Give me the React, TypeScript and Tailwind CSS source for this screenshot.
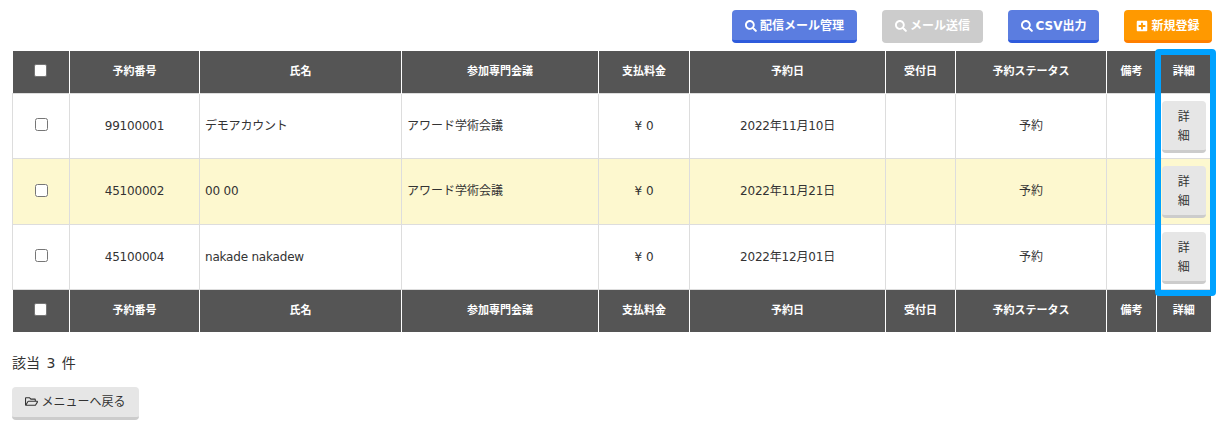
import React from 'react';
import { FaSearch, FaPlusSquare, FaRegFolderOpen } from 'react-icons/fa';

const heads = ['予約番号', '氏名', '参加専門会議', '支払料金', '予約日', '受付日', '予約ステータス', '備考', '詳細'];

const rows = [
    { no: '99100001', name: 'デモアカウント', conf: 'アワード学術会議', date: '2022年11月10日', bg: 'bg-white' },
    { no: '45100002', name: '00 00', conf: 'アワード学術会議', date: '2022年11月21日', bg: 'bg-[#fdf8cf]' },
    { no: '45100004', name: 'nakade nakadew', conf: '', date: '2022年12月01日', bg: 'bg-white' },
];

function TopButton({ label, icon, className }: { label: string; icon: React.ReactNode; className: string }) {
    return (
        <button className={`flex h-[33px] items-center justify-center gap-[3px] rounded-[4px] border-b-[3px] pt-px text-[12px] font-bold text-white ${className}`}>
            {icon}
            {label}
        </button>
    );
}

function HeadRow() {
    return (
        <tr className="h-[42px] bg-[#555555] text-[11px] font-bold text-white">
            <th className="border-r border-white p-0">
                <span className="mx-auto mb-[2px] block h-[13px] w-[13px] rounded-[2px] border border-[#767676] bg-white" />
            </th>
            {heads.map((h, i) => (
                <th key={h} className={i < heads.length - 1 ? 'border-r border-white p-0' : 'p-0'}>
                    {h}
                </th>
            ))}
        </tr>
    );
}

export default function App() {
    return (
        <div className="relative h-[430px] w-[1224px] overflow-hidden bg-white px-3 pt-[10px] font-['DejaVu_Sans','Noto_Sans_CJK_JP',sans-serif] text-[#333333]">
            <div className="mb-2 flex justify-end gap-[25px]">
                <TopButton label="配信メール管理" icon={<FaSearch size={12} />} className="w-[125px] border-[#2f5bdc] bg-[#5b7de0]" />
                <TopButton label="メール送信" icon={<FaSearch size={12} />} className="w-[101px] border-[#cccccc] bg-[#cccccc]" />
                <TopButton label="CSV出力" icon={<FaSearch size={12} />} className="w-[91px] border-[#2f5bdc] bg-[#5b7de0]" />
                <TopButton label="新規登録" icon={<FaPlusSquare size={12} />} className="w-[88px] border-[#ff7f00] bg-[#ff9900]" />
            </div>

            <table className="w-[1198px] table-fixed border-collapse">
                <colgroup>
                    <col className="w-[57px]" />
                    <col className="w-[130px]" />
                    <col className="w-[202px]" />
                    <col className="w-[197px]" />
                    <col className="w-[91px]" />
                    <col className="w-[196px]" />
                    <col className="w-[70px]" />
                    <col className="w-[151px]" />
                    <col className="w-[50px]" />
                    <col className="w-[54px]" />
                </colgroup>
                <thead>
                    <HeadRow />
                </thead>
                <tbody className="text-[12px]">
                    {rows.map((r) => (
                        <tr key={r.no} className={`h-[65.5px] ${r.bg}`}>
                            <td className="border border-[#dddddd] p-0">
                                <input type="checkbox" className="mx-auto mb-[2px] block h-[13px] w-[13px]" readOnly />
                            </td>
                            <td className="border border-[#dddddd] p-0 text-center tracking-[-0.2px]">{r.no}</td>
                            <td className="border border-[#dddddd] px-[5px] py-0 tracking-[-0.2px]">{r.name}</td>
                            <td className="border border-[#dddddd] px-[5px] py-0">{r.conf}</td>
                            <td className="border border-[#dddddd] p-0 text-center">¥ 0</td>
                            <td className="border border-[#dddddd] p-0 text-center tracking-[-0.2px]">{r.date}</td>
                            <td className="border border-[#dddddd] p-0" />
                            <td className="border border-[#dddddd] p-0 text-center">予約</td>
                            <td className="border border-[#dddddd] p-0" />
                            <td className="border-y border-[#dddddd] p-0">
                                <button className="mx-auto mt-[2px] block h-[52px] w-[44px] rounded-[4px] border-b-[3px] border-[#cccccc] bg-[#e6e6e6] pt-[3px] text-[12px] leading-[19px] text-[#333333]">
                                    詳<br />細
                                </button>
                            </td>
                        </tr>
                    ))}
                </tbody>
                <tfoot>
                    <HeadRow />
                </tfoot>
            </table>

            <p className="mt-[21px] text-[14px] leading-5 [word-spacing:2px]">該当 3 件</p>
            <button className="mt-[14px] flex h-[33px] w-[127px] items-center justify-center gap-[3px] rounded-[4px] border-b-[3px] border-[#cccccc] bg-[#e6e6e6] text-[12px] text-[#333333]">
                <FaRegFolderOpen size={13} />
                メニューへ戻る
            </button>

            {/* 詳細列のハイライト枠 */}
            <div className="pointer-events-none absolute left-[1155px] top-[49px] h-[247px] w-[61px] rounded-[4px] border-[6px] border-[#00a2ff]" />
        </div>
    );
}
